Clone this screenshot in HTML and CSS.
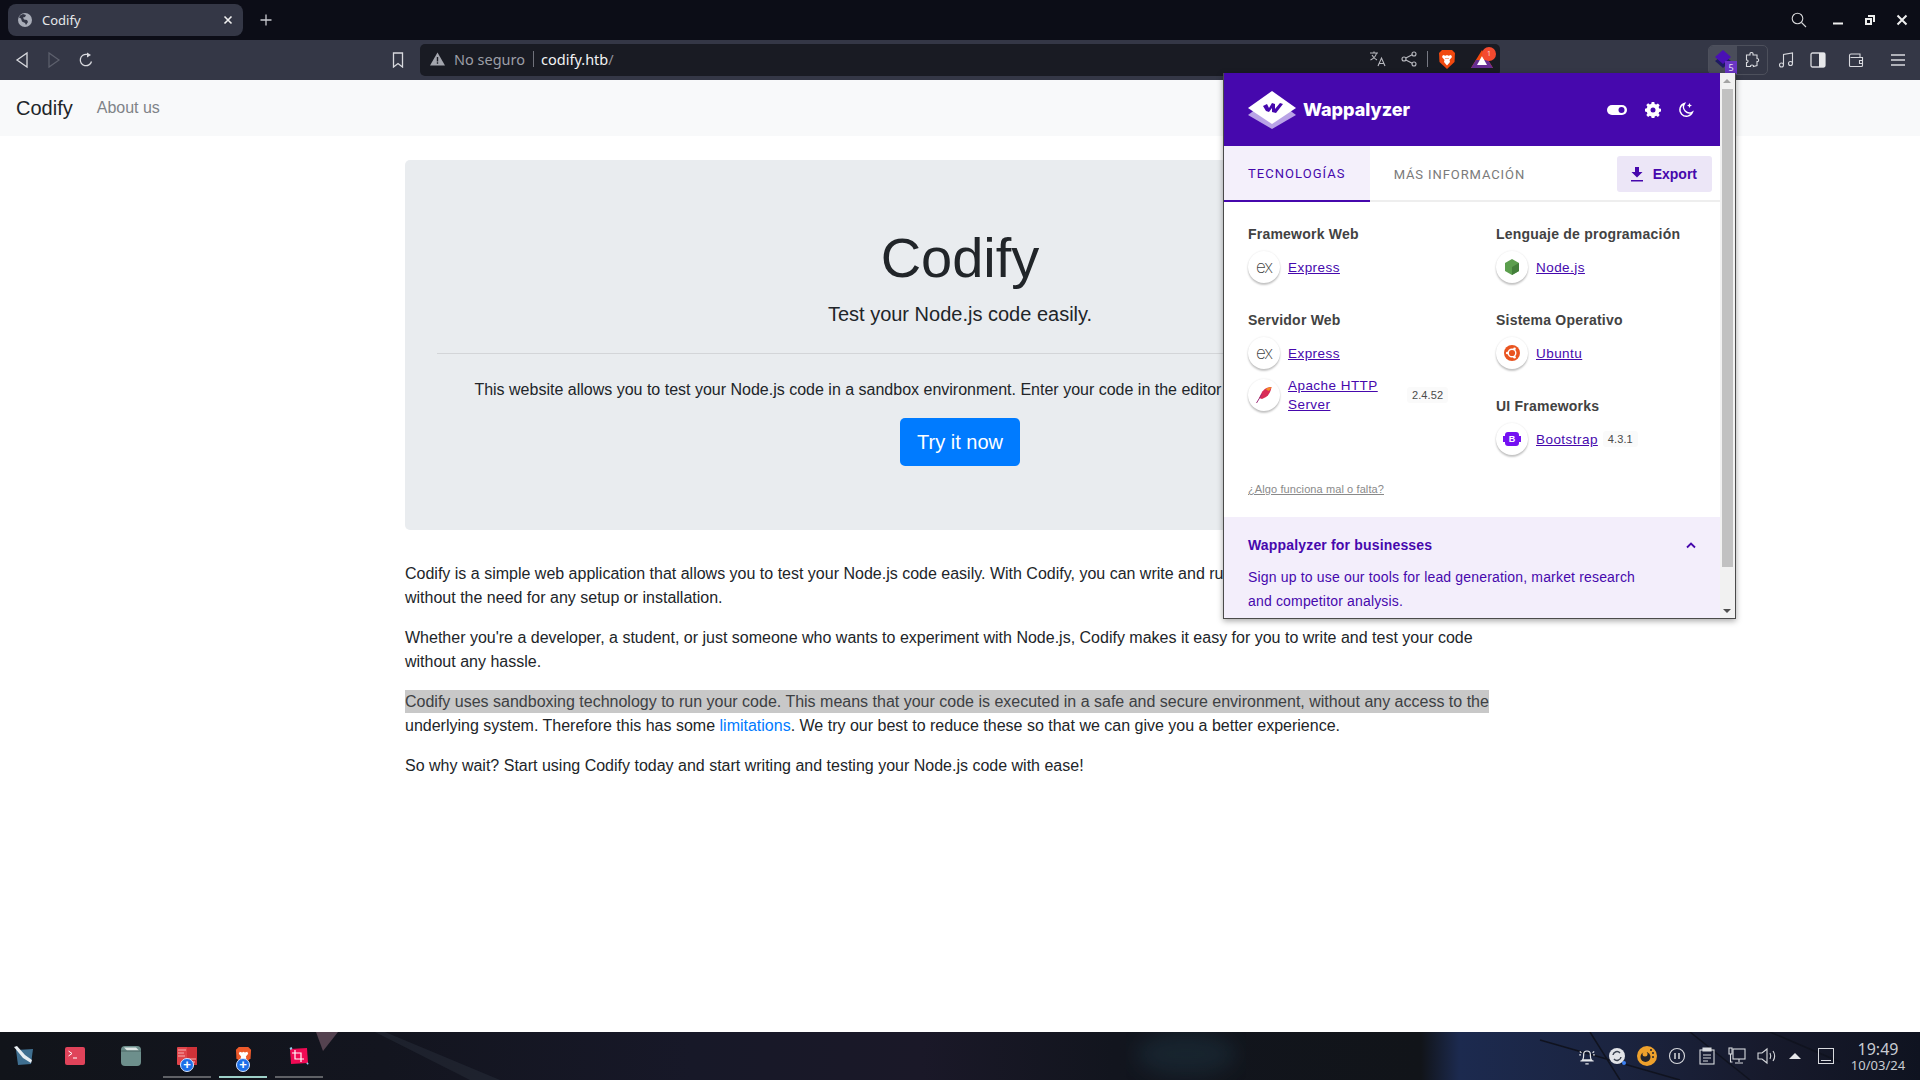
FILE: index.html
```html
<!DOCTYPE html>
<html lang="en">
<head>
    <meta charset="UTF-8">
    <title>Codify</title>
    <link rel="stylesheet" href="styles.css">
</head>
<body>

<div class="tabbar">
    <div class="tab">
        <svg class="tabIcon" width="16" height="16" viewBox="0 0 16 16"><circle cx="8" cy="8" r="7" fill="#a9adb8"/><path d="M3 3.500l3-1.500 3 1-1 2-2 .5 1 2 3 .5 1 2-2 3-1-2-3-1.500-1-3-2-1z" fill="#343746"/></svg>
        <span class="tabTitle">Codify</span>
        <svg class="tabClose" width="10" height="10" viewBox="0 0 10 10"><path d="M1.500 1.500l7 7M8.500 1.500l-7 7" stroke="#f0f0f0" stroke-width="1.600"/></svg>
    </div>
    <svg class="newTab" width="12" height="12" viewBox="0 0 12 12"><path d="M6 .5v11M.5 6h11" stroke="#c8c9cf" stroke-width="1.300"/></svg>
    <div class="winBtns">
        <svg class="searchBtn" width="16" height="16" viewBox="0 0 16 16"><circle cx="6.500" cy="6.500" r="5.300" fill="none" stroke="#d5d5d8" stroke-width="1.100"/><path d="M10.500 10.500l4.500 4.500" stroke="#d5d5d8" stroke-width="1.100"/></svg>
        <svg width="12" height="12" viewBox="0 0 12 12"><path d="M1 9.500h10" stroke="#eee" stroke-width="2"/></svg>
        <svg width="12" height="12" viewBox="0 0 12 12"><path d="M4 1h7v7H9V3H4zM1 4h7v7H1z" fill="#eee"/><path d="M3 6h3v3H3z" fill="#0c0d17"/></svg>
        <svg width="12" height="12" viewBox="0 0 12 12"><path d="M1.500 1.500l9 9M10.500 1.500l-9 9" stroke="#eee" stroke-width="2"/></svg>
    </div>
</div>

<div class="toolbar">
    <div class="tool"><svg width="16" height="18" viewBox="0 0 16 18"><path d="M13 2v14L3 9z" fill="none" stroke="#d8d9de" stroke-width="1.300"/></svg></div>
    <div class="tool"><svg width="16" height="18" viewBox="0 0 16 18"><path d="M3 2v14l10-7z" fill="none" stroke="#5d606d" stroke-width="1.200"/></svg></div>
    <div class="tool"><svg width="16" height="16" viewBox="0 0 16 16"><path d="M13.500 9.500A5.700 5.700 0 1 1 9 2.400" fill="none" stroke="#d8d9de" stroke-width="1.300"/><path d="M9 .5l4 2.500-4 2.500z" fill="#d8d9de"/></svg></div>
    <div class="tool bookmark"><svg width="14" height="16" viewBox="0 0 14 16"><path d="M2.500 1h9v14L7 11.500 2.500 15z" fill="none" stroke="#d8d9de" stroke-width="1.300"/></svg></div>

    <div class="addressBar">
        <svg class="warnIcon" width="15" height="14" viewBox="0 0 15 14"><path d="M7.500 .5L15 13.500H0z" fill="#a3a5ad"/><path d="M6.800 5h1.400v4.500H6.800zM6.800 10.300h1.400v1.400H6.800z" fill="#1a1c24"/></svg>
        <span class="notSecure">No seguro</span>
        <span class="urlSep"></span>
        <span class="url">codify.htb<span class="urlSlash">/</span></span>
        <div class="barIcons">
            <svg width="18" height="18" viewBox="0 0 18 18" fill="none" stroke="#b9bac0" stroke-width="1.100"><path d="M1 3h8M5 1.500V3M7.500 3C7 6 4.500 8.500 1.500 10M3 5c1 2 3 4 5 5"/><path d="M9 16l3.500-8 3.500 8M10.200 13.500h4.600"/></svg>
            <svg class="shareIcon" width="16" height="16" viewBox="0 0 16 16" fill="none" stroke="#b9bac0" stroke-width="1.100"><circle cx="3" cy="8" r="2"/><circle cx="13" cy="3" r="2"/><circle cx="13" cy="13" r="2"/><path d="M4.800 7l6.400-3.200M4.800 9l6.400 3.200"/></svg>
            <span class="barSep"></span>
            <svg class="braveIcon" width="18" height="21" viewBox="0 0 18 21"><path d="M4 1h10l3 3-.5 9L9 20 1.500 13 1 4z" fill="#f1490f"/><path d="M5 6l2.500.8L9 6l1.500.8L13 6l1 2-2.500 3 .5 2-3 3.500L6 13l.5-2L4 8z" fill="#fff"/><path d="M7.500 9.500h1M9.500 9.500h1" stroke="#f1490f"/></svg>
            <div class="batWrap">
                <svg width="22" height="18" viewBox="0 0 22 18"><path d="M11 0l11 18H0z" fill="#f1490f"/><path d="M0 18l5-8 12 0 5 8z" fill="#662d91"/><path d="M11 6l5 9H6z" fill="#fff"/></svg>
                <span class="batBadge">1</span>
            </div>
        </div>
    </div>

    <div class="extGroup">
        <div class="extActive">
            <svg width="18" height="20" viewBox="0 0 18 20"><path d="M9 5l8 6-8 7-8-7z" fill="#1e1b62"/><path d="M9 0l8 7-8 7-8-7z" fill="#4a10b5"/></svg>
            <span class="extBadge">5</span>
        </div>
        <div class="extPuzzle"><svg width="16" height="16" viewBox="0 0 16 16"><path d="M6 1.500c0-1.300 3-1.300 3 0v1.500h4v3.500c1.800-.500 2.500 3.500 0 3v4l-3.500 1c.5-2-3.500-2-3 0H2.500v-4c2 .3 2-3 0-2.500V3H6z" fill="none" stroke="#d8d9de" stroke-width="1.100"/></svg></div>
    </div>
    <div class="tool"><svg width="16" height="16" viewBox="0 0 16 16" fill="none" stroke="#d8d9de" stroke-width="1.100"><circle cx="3.500" cy="13" r="2"/><circle cx="12.500" cy="11.500" r="2"/><path d="M5.500 13V2.500l9-1.500v10.500"/></svg></div>
    <div class="tool"><svg width="16" height="16" viewBox="0 0 16 16"><rect x="1" y="1" width="14" height="14" rx="1.500" fill="none" stroke="#d8d9de" stroke-width="1.300"/><path d="M9 1h6v14H9z" fill="#e6e6e9"/></svg></div>
    <div class="tool wallet"><svg width="16" height="16" viewBox="0 0 16 16" fill="none" stroke="#d8d9de" stroke-width="1.100"><path d="M1.500 3.500v10a1 1 0 0 0 1 1h11a1 1 0 0 0 1-1v-8H2.500M1.500 3.500a1.500 1.500 0 0 1 1.500-1.500h9v3.500"/><path d="M14.500 8.500h-3v3h3"/></svg></div>
    <div class="tool menuBtn"><svg width="16" height="14" viewBox="0 0 16 14"><path d="M1 2h14M1 7h14M1 12h14" stroke="#d8d9de" stroke-width="1.300"/></svg></div>
</div>

<div class="page">
    <nav class="navbar">
        <a class="brand">Codify</a>
        <a class="navLink">About us</a>
    </nav>
    <div class="container">
        <div class="jumbotron">
            <h1 class="display">Codify</h1>
            <p class="lead">Test your Node.js code easily.</p>
            <hr class="rule">
            <p class="intro">This website allows you to test your Node.js code in a sandbox environment. Enter your code in the editor and see its output on the page.</p>
            <a class="btnPrimary">Try it now</a>
        </div>
        <p>Codify is a simple web application that allows you to test your Node.js code easily. With Codify, you can write and run your code directly in your browser, without the need for any setup or installation.</p>
        <p>Whether you're a developer, a student, or just someone who wants to experiment with Node.js, Codify makes it easy for you to write and test your code without any hassle.</p>
        <p><span class="selected">Codify uses sandboxing technology to run your code. This means that your code is executed in a safe and secure environment, without any access to the</span> underlying system. Therefore this has some <a class="textLink">limitations</a>. We try our best to reduce these so that we can give you a better experience.</p>
        <p>So why wait? Start using Codify today and start writing and testing your Node.js code with ease!</p>
    </div>
</div>

<div class="popup">
    <div class="popupMain">
        <div class="wapHeader">
            <svg class="wapLogo" width="48" height="38" viewBox="0 0 48 38"><path d="M24 6l24 18-24 14L0 24z" fill="#b9a3e6"/><path d="M24 0l24 17-24 16L0 17z" fill="#fff"/><path d="M15 15l4-2 2 4 3-5 3 1 0 5 5-6 3 1-7 9-4-1 0-4-3 4-3-1z" fill="#4608ad"/></svg>
            <span class="wapName">Wappalyzer</span>
            <svg class="headIcon toggleIcon" width="20" height="12" viewBox="0 0 20 12"><rect y="1" width="20" height="10" rx="5" fill="#fff"/><circle cx="14.500" cy="6" r="3" fill="#4608ad"/></svg>
            <svg class="headIcon gearIcon" width="16" height="16" viewBox="0 0 16 16"><path d="M6.700 0h2.600l.4 2 1.500.6 1.700-1.100 1.800 1.800-1.100 1.700.6 1.500 2 .4v2.600l-2 .4-.6 1.500 1.100 1.700-1.800 1.800-1.700-1.100-1.500.6-.4 2H6.700l-.4-2-1.500-.6-1.700 1.100-1.800-1.800 1.100-1.700-.6-1.500-2-.4V6.700l2-.4.6-1.500L1.300 3.100l1.800-1.800 1.700 1.100 1.500-.6z" fill="#fff"/><circle cx="8" cy="8" r="2.500" fill="#4608ad"/></svg>
            <svg class="headIcon moonIcon" width="16" height="16" viewBox="0 0 16 16"><path d="M6.500 1.500A6.500 6.500 0 1 0 14.500 10 6 6 0 0 1 6.500 1.500z" fill="none" stroke="#fff" stroke-width="1.400"/><path d="M11.500 1l.8 1.700 1.700.8-1.700.8-.8 1.700-.8-1.700L9 3.500l1.700-.8z" fill="#fff"/></svg>
        </div>

        <div class="wapTabs">
            <div class="wapTab active">Tecnologías</div>
            <div class="wapTab">Más información</div>
            <div class="exportBtn">
                <svg width="14" height="15" viewBox="0 0 14 15"><path d="M5 0h4v5h3.500L7 10.500 1.500 5H5zM1 13h12v1.500H1z" fill="#4608ad"/></svg>
                Export
            </div>
        </div>

        <div class="techGrid">
            <div class="techCol">
                <div class="techGroup">
                    <div class="techTitle">Framework Web</div>
                    <div class="techRow">
                        <span class="techIcon exText">ex</span>
                        <a class="techLink">Express</a>
                    </div>
                </div>
                <div class="techGroup">
                    <div class="techTitle">Servidor Web</div>
                    <div class="techRow">
                        <span class="techIcon exText">ex</span>
                        <a class="techLink">Express</a>
                    </div>
                    <div class="techRow rowTwoLine">
                        <span class="techIcon"><svg width="18" height="18" viewBox="0 0 18 18"><path d="M16.500 1c-4 0-8 2-10 6L4 12l3 1 4-2c3-2 5-6 5.500-10z" fill="#d92c56"/><path d="M16.500 1c-2 0-4 .8-6 2l3 2c1.500-1 2.500-2.500 3-4z" fill="#f58a28"/><path d="M1.500 17L7 8" stroke="#9b2a78" stroke-width="1"/></svg></span>
                        <a class="techLink apacheLink">Apache HTTP Server</a>
                        <span class="version apacheVersion">2.4.52</span>
                    </div>
                </div>
            </div>
            <div class="techCol">
                <div class="techGroup">
                    <div class="techTitle">Lenguaje de programación</div>
                    <div class="techRow">
                        <span class="techIcon"><svg width="16" height="18" viewBox="0 0 16 18"><path d="M8 1l7 4v8l-7 4-7-4V5z" fill="#5b9e4d"/><path d="M8 9l7-4v8l-7 4z" fill="#437f3a"/></svg></span>
                        <a class="techLink">Node.js</a>
                    </div>
                </div>
                <div class="techGroup">
                    <div class="techTitle">Sistema Operativo</div>
                    <div class="techRow">
                        <span class="techIcon"><svg width="16" height="16" viewBox="0 0 16 16"><circle cx="8" cy="8" r="8" fill="#e95420"/><circle cx="8" cy="8" r="3.800" fill="none" stroke="#fff" stroke-width="1.400"/><circle cx="3.200" cy="8" r="1.300" fill="#fff"/><circle cx="10.500" cy="3.800" r="1.300" fill="#fff"/><circle cx="10.500" cy="12.200" r="1.300" fill="#fff"/></svg></span>
                        <a class="techLink">Ubuntu</a>
                    </div>
                </div>
                <div class="techGroup">
                    <div class="techTitle">UI Frameworks</div>
                    <div class="techRow">
                        <span class="techIcon"><span class="bootIcon">B</span></span>
                        <a class="techLink">Bootstrap</a>
                        <span class="version">4.3.1</span>
                    </div>
                </div>
            </div>
        </div>

        <a class="reportLink">¿Algo funciona mal o falta?</a>

        <div class="bizPanel">
            <div class="bizHead">
                <span>Wappalyzer for businesses</span>
                <svg width="10" height="7" viewBox="0 0 10 7"><path d="M1 5.500l4-4 4 4" fill="none" stroke="#4608ad" stroke-width="1.800"/></svg>
            </div>
            <div class="bizText">Sign up to use our tools for lead generation, market research and competitor analysis.</div>
        </div>
    </div>
    <div class="scrollbar">
        <span class="arrowUp"></span>
        <span class="thumb"></span>
        <span class="arrowDown"></span>
    </div>
</div>

<div class="taskbar">
    <svg class="wallpaper" width="1920" height="48" viewBox="0 0 1920 48">
        <defs>
            <linearGradient id="wallBase">
                <stop offset="0" stop-color="#11141a"/>
                <stop offset="0.2" stop-color="#13151f"/>
                <stop offset="0.36" stop-color="#171828"/>
                <stop offset="0.48" stop-color="#1a1828"/>
                <stop offset="0.58" stop-color="#12151e"/>
                <stop offset="0.74" stop-color="#111419"/>
                <stop offset="0.76" stop-color="#1c2a4f"/>
                <stop offset="0.84" stop-color="#1b2440"/>
                <stop offset="0.92" stop-color="#171a2c"/>
                <stop offset="1" stop-color="#0f1320"/>
            </linearGradient>
            <filter id="soft"><feGaussianBlur stdDeviation="10"/></filter>
        </defs>
        <rect width="1920" height="48" fill="url(#wallBase)"/>
        <path d="M316 0h22l-15 19z" fill="#54424f"/>
        <path d="M375 0h10l115 48h-30z" fill="#2e3442" opacity="0.4"/>
        <ellipse cx="1186" cy="22" rx="50" ry="22" fill="#24404f" opacity="0.35" filter="url(#soft)"/>
        <path d="M1590 0l30 48M1540 8l140 40M1690 0l60 48M1770 0l70 30" stroke="#10131f" stroke-width="1.500" fill="none"/>
    </svg>
    <div class="taskItem firstItem"><svg width="22" height="20" viewBox="0 0 22 20"><path d="M3 4l17-1-2 15-13 1z" fill="#3f6f90"/><path d="M1 1l3-1 8 9 7 5-1 3-8-5z" fill="#e8eef2"/></svg></div>
    <div class="taskItem"><svg width="20" height="18" viewBox="0 0 20 18"><rect width="20" height="18" rx="2" fill="#e0435a"/><path d="M3.500 4l3.500 2.500-3.500 2.500" fill="none" stroke="#fff" stroke-width="1"/><path d="M8 11h4" stroke="#fff"/></svg></div>
    <div class="taskItem"><svg width="20" height="20" viewBox="0 0 20 20"><rect width="20" height="20" rx="4" fill="#6d8f8c"/><path d="M3 1.500h12l3 3H6z" fill="#dfe8e6"/><path d="M0 5h20" stroke="#4c6664"/></svg></div>
    <div class="taskItem running">
        <svg width="20" height="18" viewBox="0 0 20 18"><rect width="20" height="18" rx="1" fill="#e0444a"/><path d="M10 0h10v18H10z" fill="#cf3238"/><path d="M1 3h8M1 6h6M1 9h7M11 12h8M11 15h7" stroke="#f5b0b0"/></svg>
        <span class="plusBadge">+</span>
    </div>
    <div class="taskItem running current">
        <svg width="17" height="20" viewBox="0 0 18 21"><path d="M4 1h10l3 3-.5 9L9 20 1.500 13 1 4z" fill="#ed5a2b"/><path d="M5 6l2.500.8L9 6l1.500.8L13 6l1 2-2.500 3 .5 2-3 3.500L6 13l.5-2L4 8z" fill="#fff"/></svg>
        <span class="plusBadge">+</span>
    </div>
    <div class="taskItem running">
        <svg width="20" height="18" viewBox="0 0 20 18"><path d="M1 2l17-1 1 15-17 1z" fill="#f00a54"/><path d="M1 2l2-1M19 16l-1 1" stroke="#8fd3ee" stroke-width="2"/><path d="M6 3v9h9M3 6h9v9" fill="none" stroke="#fff" stroke-width="1.200"/></svg>
    </div>

    <div class="tray">
        <span class="trayIcon"><svg width="20" height="20" viewBox="0 0 18 18" fill="none" stroke="#e4e6ea" stroke-width="1.100"><path d="M5 12.500c1-1 1-3 1-5a3 3 0 0 1 6 0c0 2 0 4 1 5zM3 13.500h12M7.500 16h3M2.500 5l1.500 1M2 8h1.500M15.500 5L14 6M16 8h-1.500"/></svg></span>
        <span class="trayIcon"><svg width="18" height="18" viewBox="0 0 18 18"><circle cx="9" cy="9" r="8" fill="#e2e4e8"/><path d="M5 8a4 4 0 0 1 7-2M13 10a4 4 0 0 1-7 2" fill="none" stroke="#3c4350" stroke-width="1.500"/><circle cx="16" cy="16" r="2" fill="#3b82f6"/></svg></span>
        <span class="trayIcon"><svg width="20" height="20" viewBox="0 0 20 20"><circle cx="10" cy="10" r="10" fill="#eea12c"/><circle cx="8.500" cy="11" r="5" fill="#23242b"/><circle cx="8" cy="8" r="2.500" fill="#eea12c"/><circle cx="16" cy="7" r="1" fill="#23242b"/><circle cx="16" cy="11" r="1" fill="#23242b"/><circle cx="14" cy="4" r="1" fill="#23242b"/></svg></span>
        <span class="trayIcon"><svg width="18" height="18" viewBox="0 0 18 18" fill="none" stroke="#d8dade" stroke-width="1.100"><circle cx="9" cy="9" r="7.500"/><path d="M7 6v6M11 6v6" stroke-width="1.500"/></svg></span>
        <span class="trayIcon"><svg width="16" height="18" viewBox="0 0 16 18" fill="none" stroke="#d8dade" stroke-width="1.100"><rect x="1" y="3" width="14" height="14"/><path d="M4 1h8v3H4z" fill="#d8dade"/><path d="M4 8h8M4 11h8M4 14h5"/></svg></span>
        <span class="trayIcon"><svg width="18" height="18" viewBox="0 0 18 18" fill="none" stroke="#d8dade" stroke-width="1.100"><rect x="5" y="2" width="12" height="10"/><rect x="1" y="1" width="3" height="6"/><path d="M2.500 7v8h2M11 12v3M7 16h8"/></svg></span>
        <span class="trayIcon"><svg width="20" height="18" viewBox="0 0 20 18" fill="none" stroke="#d8dade" stroke-width="1.100"><path d="M1 6h4l5-4v14l-5-4H1z"/><path d="M13 6c1 2 1 4 0 6M16 4c2 3 2 7 0 10"/></svg></span>
        <span class="trayIcon caret"><svg width="12" height="6" viewBox="0 0 12 6"><path d="M6 0l6 6H0z" fill="#e6e7ea"/></svg></span>
        <span class="trayIcon showDesk"><svg width="16" height="16" viewBox="0 0 16 16" fill="none" stroke="#d8dade"><rect x=".5" y=".5" width="15" height="15"/><path d="M3 12.500h10"/></svg></span>
        <div class="clock">
            <span class="clockTime">19:49</span>
            <span class="clockDate">10/03/24</span>
        </div>
    </div>
</div>

</body>
</html>
```

FILE: styles.css
```css
*{
    padding:0px;
    margin:0px;
    box-sizing: border-box;
}
html,body{
    width:1920px;
    height:1080px;
    overflow: hidden;
}
body{
    position: relative;
    display: flex;
    flex-direction: column;
    font-family: "Liberation Sans", Arial, sans-serif;
    font-size: 16px;
    line-height: 24px;
    color:#212529;
    background-color: #fff;
}

/* browser chrome */
.tabbar{
    display: flex;
    align-items: center;
    height:40px;
    flex-shrink: 0;
    padding-left:8px;
    background-color: #0c0d17;
    font-family: "Noto Sans", sans-serif;
}
.tab{
    display: flex;
    align-items: center;
    width:235px;
    height:32px;
    padding:0 10px 0 9px;
    border-radius: 8px;
    background-color: #343746;
    color:#e6e7ea;
    font-size: 13px;
}
.tabTitle{
    margin-left:9px;
    flex-grow: 1;
}
.newTab{
    margin-left:17px;
}
.winBtns{
    display: flex;
    align-items: center;
    margin-left:auto;
    padding-right:12px;
    gap:20px;
}
.searchBtn{
    margin-right:5px;
}
.toolbar{
    position: relative;
    display: flex;
    align-items: center;
    height:40px;
    flex-shrink: 0;
    padding-left:6px;
    background-color: #343746;
}
.tool{
    display: flex;
    align-items: center;
    justify-content: center;
    width:32px;
    height:32px;
    flex-shrink: 0;
}
.bookmark{
    margin-left:280px;
}
.wallet{
    margin-left:6px;
}
.menuBtn{
    margin-left:10px;
}
.addressBar{
    display: flex;
    align-items: center;
    width:1080px;
    height:32px;
    margin-left:6px;
    padding:0 1px 2px 10px;
    border-radius: 5px;
    background-color: #191b23;
    font-family: "Noto Sans", sans-serif;
    font-size: 14.500px;
}
.notSecure{
    margin-left:9px;
    color:#9c9ea6;
}
.urlSep{
    width:1px;
    height:16px;
    margin:0 7px 0 8px;
    background-color: #6f717a;
}
.url{
    color:#f2f2f4;
}
.urlSlash{
    color:#8d8f98;
}
.barIcons{
    display: flex;
    align-items: center;
    margin-left:auto;
}
.shareIcon{
    margin-left:14px;
}
.barSep{
    width:1px;
    height:16px;
    margin-left:10px;
    background-color: #777983;
}
.braveIcon{
    margin-left:10px;
}
.batWrap{
    position: relative;
    display: flex;
    margin-left:15px;
    margin-right:6px;
}
.batBadge{
    position: absolute;
    top:-3px;
    right:-3px;
    width:14px;
    height:14px;
    border-radius: 50%;
    background-color: #f44a2f;
    color:#ffd9d0;
    font-size: 7px;
    line-height: 14px;
    text-align: center;
}
.extGroup{
    display: flex;
    align-items: center;
    width:60px;
    height:30px;
    margin-left:208px;
    margin-right:2px;
    border:1px solid #4d505c;
    border-radius: 5px;
}
.extActive{
    position: relative;
    display: flex;
    align-items: center;
    justify-content: center;
    width:28px;
    height:100%;
    background-color: #4a4d5a;
    border-radius: 4px 0 0 4px;
}
.extBadge{
    position: absolute;
    right:0px;
    bottom:0px;
    width:12px;
    height:13px;
    background-color: #6a35c4;
    color:#e8e0f8;
    font-family: "Noto Sans", sans-serif;
    font-size: 9px;
    line-height: 13px;
    text-align: center;
}
.extPuzzle{
    display: flex;
    align-items: center;
    justify-content: center;
    flex-grow: 1;
}

/* the page */
.page{
    flex-grow: 1;
    background-color: #fff;
}
.navbar{
    display: flex;
    align-items: center;
    height:56px;
    padding:0 16px;
    background-color: #f8f9fa;
}
.brand{
    margin-right:24px;
    font-size: 20px;
    color:#212529;
}
.navLink{
    color:#7f8388;
}
.container{
    width:1140px;
    margin:24px auto 0;
    padding:0 15px;
}
.container > p{
    margin-bottom:16px;
}
.jumbotron{
    height:370px;
    margin-bottom:32px;
    padding:64px 32px;
    border-radius: 5px;
    background-color: #e9ecef;
    text-align: center;
}
.display{
    margin-bottom:8px;
    font-size: 56px;
    font-weight: normal;
    line-height: 67px;
}
.lead{
    font-size: 20px;
    line-height: 30px;
}
.rule{
    margin:24px 0;
    border:none;
    border-top:1px solid #d3d5d8;
}
.intro{
    margin-bottom:16px;
}
.btnPrimary{
    display: inline-block;
    padding:8px 17px;
    border-radius: 5px;
    background-color: #007bff;
    color:#fff;
    font-size: 20px;
    line-height: 32px;
}
.selected{
    padding:3px 0;
    background-color: #c8c8c8;
    color:#3d4043;
}
.textLink{
    color:#007bff;
}

/* wappalyzer popup */
.popup{
    position: absolute;
    left:1223px;
    top:73px;
    display: flex;
    width:513px;
    height:546px;
    overflow: hidden;
    border:1px solid #4a4a4a;
    border-top:none;
    background-color: #fff;
    box-shadow: 0 2px 6px rgba(0,0,0,0.35);
}
.popupMain{
    display: flex;
    flex-direction: column;
    flex-grow: 1;
    min-width: 0;
}
.wapHeader{
    display: flex;
    align-items: center;
    height:73px;
    flex-shrink: 0;
    padding:0 26px 0 24px;
    background-color: #4608ad;
}
.wapName{
    margin-left:7px;
    flex-grow: 1;
    color:#fff;
    font-family: Inter, sans-serif;
    font-size: 18px;
    font-weight: 800;
}
.headIcon{
    display: block;
}
.gearIcon{
    margin-left:18px;
}
.moonIcon{
    margin-left:17px;
}
.wapTabs{
    display: flex;
    align-items: stretch;
    height:56px;
    flex-shrink: 0;
    border-bottom:2px solid #eee;
}
.wapTab{
    padding:1px 23px 0 24px;
    color:#7a7a7a;
    font-family: Roboto, sans-serif;
    font-size: 13px;
    letter-spacing: 0.900px;
    line-height: 56px;
    text-transform: uppercase;
}
.wapTab.active{
    height:56px;
    padding:0 24px;
    background-color: #f4f0fb;
    border-bottom:2px solid #4608ad;
    color:#4608ad;
    letter-spacing: 1.050px;
}
.exportBtn{
    display: flex;
    align-items: center;
    gap:9px;
    align-self: flex-start;
    height:36px;
    margin:10px 8px 0 auto;
    padding:0 15px 0 13px;
    border-radius: 3px;
    background-color: #ece6f7;
    color:#4608ad;
    font-size: 14px;
    font-weight: bold;
}
.techGrid{
    display: grid;
    grid-template-columns: 248px 1fr;
    padding:20px 24px 0;
    flex-grow: 1;
}
.techGroup{
    margin-bottom:25px;
}
.techGroup:last-child{
    margin-bottom:0px;
}
.techTitle{
    margin-bottom:5px;
    color:#424242;
    font-size: 14px;
    font-weight: bold;
    letter-spacing: 0.220px;
    line-height: 24px;
}
.techRow{
    display: flex;
    align-items: center;
    min-height:32px;
    margin-top:5px;
    font-size: 13.500px;
}
.rowTwoLine{
    margin-top:7px;
}
.techIcon{
    display: flex;
    align-items: center;
    justify-content: center;
    width:32px;
    height:32px;
    flex-shrink: 0;
    border-radius: 50%;
    background-color: #fff;
    box-shadow: 0 2px 2px rgba(0,0,0,0.22), 0 0 2px rgba(0,0,0,0.1);
}
.exText{
    color:#444;
    font-family: Inter, sans-serif;
    font-size: 17px;
    font-weight: 200;
    letter-spacing: -1px;
    line-height: 32px;
}
.techLink{
    margin-left:8px;
    color:#4608ad;
    letter-spacing: 0.450px;
    line-height: 19px;
    text-decoration: underline;
}
.apacheLink{
    width:108px;
}
.version{
    margin-left:5px;
    padding:0 5px;
    border-radius: 3px;
    background-color: #fafafa;
    color:#4a4a4a;
    font-size: 11px;
    letter-spacing: 0.100px;
    line-height: 16px;
}
.apacheVersion{
    margin-left:11px;
}
.bootIcon{
    width:14px;
    height:14px;
    border-radius: 3px;
    background-color: #7410f2;
    box-shadow: -6px 0 0 -4px #7410f2, 6px 0 0 -4px #7410f2;
    color:#fff;
    font-size: 9px;
    font-weight: bold;
    line-height: 14px;
    letter-spacing: 0;
    text-align: center;
}
.reportLink{
    padding-left:24px;
    color:#8a8a8a;
    font-size: 11px;
    letter-spacing: 0.100px;
    line-height: 16px;
    text-decoration: underline;
}
.bizPanel{
    height:101px;
    flex-shrink: 0;
    margin-top:20px;
    padding:16px 24px;
    background-color: #f3eefb;
    color:#4608ad;
    font-size: 14px;
    letter-spacing: 0.170px;
}
.bizHead{
    display: flex;
    align-items: center;
    justify-content: space-between;
    height:24px;
    font-weight: bold;
}
.bizText{
    width:400px;
    margin-top:8px;
}
.scrollbar{
    position: relative;
    width:15px;
    flex-shrink: 0;
    background-color: #f1f1f1;
}
.thumb{
    position: absolute;
    left:2px;
    top:16px;
    width:11px;
    height:478px;
    background-color: #c1c1c1;
}
.arrowUp,.arrowDown{
    position: absolute;
    left:3px;
    width:0;
    height:0;
    border-left:4px solid transparent;
    border-right:4px solid transparent;
}
.arrowUp{
    top:6px;
    border-bottom:4px solid #a3a3a3;
}
.arrowDown{
    bottom:5px;
    border-top:4px solid #4f4f4f;
}

/* desktop panel */
.taskbar{
    position: relative;
    display: flex;
    align-items: center;
    height:48px;
    flex-shrink: 0;
    background-color: #11141d;
}
.wallpaper{
    position: absolute;
    left:0px;
    top:0px;
}
.taskItem{
    position: relative;
    display: flex;
    align-items: center;
    justify-content: center;
    width:48px;
    height:48px;
    margin-right:8px;
}
.firstItem{
    margin-right:3px;
}
.running::after{
    content: '';
    position: absolute;
    left:0px;
    right:0px;
    bottom:2px;
    height:2px;
    background-color: #5f6166;
}
.current::after{
    background-color: #9ed0c8;
}
.plusBadge{
    position: absolute;
    left:17px;
    top:26px;
    width:14px;
    height:14px;
    border-radius: 50%;
    background-color: #1d6fe8;
    border:1px solid #d8e6ff;
    color:#fff;
    font-size: 13px;
    font-weight: bold;
    line-height: 11px;
    text-align: center;
    z-index: 1;
}
.tray{
    position: relative;
    display: flex;
    align-items: center;
    margin-left:auto;
    padding-right:12px;
}
.trayIcon{
    display: flex;
    align-items: center;
    justify-content: center;
    width:30px;
}
.caret{
    margin-left:-2px;
}
.showDesk{
    margin-left:1px;
}
.clock{
    display: flex;
    flex-direction: column;
    align-items: center;
    width:60px;
    margin-left:7px;
    padding-top:1px;
    color:#c9ccd2;
    font-family: "Noto Sans", sans-serif;
}
.clockTime{
    font-size: 16px;
    line-height: 17px;
}
.clockDate{
    font-size: 13px;
    line-height: 15px;
}
```
